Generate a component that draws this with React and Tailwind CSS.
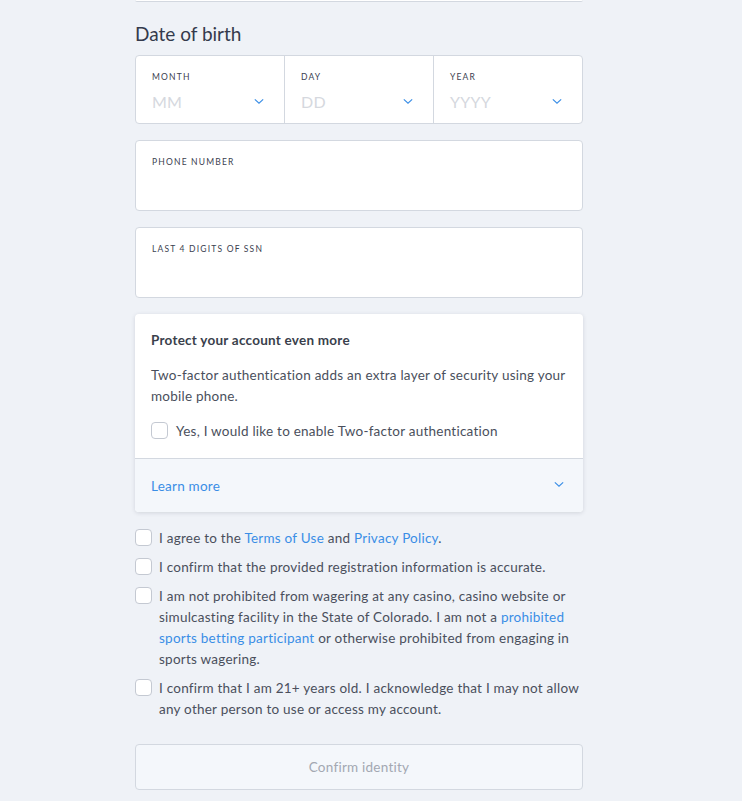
import { useState } from 'react';

// DOB / phone / SSN form tail + consent checkboxes
function Chevron({ className = '' }) {
  return (
    <svg viewBox="0 0 12 8" className={`w-[10px] h-[7px] ${className}`} fill="none" stroke="#3a8ee6" strokeWidth="1.4">
      <path d="M1 1.5l5 4.5 5-4.5" />
    </svg>
  );
}

function Box({ checked, onChange }) {
  return (
    <button
      type="button"
      onClick={() => onChange(!checked)}
      className={`w-[17px] h-[17px] shrink-0 rounded-[4px] border bg-white mt-[1px] ${checked ? 'border-[#3a8ee6] bg-[#3a8ee6]' : 'border-[#c4c9d2]'}`}
    />
  );
}

function Field({ label }) {
  return (
    <div className="h-[71px] bg-white border border-[#d3d8e0] rounded-[4px] px-4 pt-[15px]">
      <div className="text-[8.5px] tracking-[0.14em] text-[#3b4150] uppercase">{label}</div>
    </div>
  );
}

function DobCell({ label, placeholder, last }) {
  return (
    <div className={`flex-1 px-4 pt-[15px] ${last ? '' : 'border-r border-[#d3d8e0]'}`}>
      <div className="text-[8.5px] tracking-[0.14em] text-[#3b4150] uppercase">{label}</div>
      <div className="flex items-center justify-between mt-[6px] pr-1">
        <span className="text-[16px] text-[#d5d8de]">{placeholder}</span>
        <Chevron />
      </div>
    </div>
  );
}

export default function App() {
  const [checks, setChecks] = useState({});
  const toggle = (k) => (v) => setChecks((c) => ({ ...c, [k]: v }));

  return (
    <div className="min-h-screen bg-[#eff2f7] text-[#3c4150] font-['Lato','Open_Sans',sans-serif] tracking-[0.015em]">
      <div className="w-[448px] ml-[135px] pb-3">
        <div className="h-[2px] bg-white border-b border-[#d3d8e0] rounded-b-[4px]" />

        <h2 className="text-[19px] text-[#343a4c] mt-[19px] leading-[26px] tracking-normal">Date of birth</h2>

        <div className="mt-[8px] h-[69px] bg-white border border-[#d3d8e0] rounded-[4px] flex">
          <DobCell label="Month" placeholder="MM" />
          <DobCell label="Day" placeholder="DD" />
          <DobCell label="Year" placeholder="YYYY" last />
        </div>

        <div className="mt-[16px] flex flex-col gap-[16px]">
          <Field label="Phone number" />
          <Field label="Last 4 digits of SSN" />
        </div>

        <div className="mt-[16px] bg-white rounded-[4px] shadow-[0_1px_4px_rgba(40,50,70,0.15)] overflow-hidden">
          <div className="px-4 pt-[16px] pb-[16px]">
            <div className="text-[13.5px] font-bold text-[#3a3f4c]">Protect your account even more</div>
            <p className="mt-[15px] text-[13.5px] leading-[21px] text-[#4a4f5c]">
              Two-factor authentication adds an extra layer of security using your mobile phone.
            </p>
            <label className="mt-[14px] flex items-start gap-[8px] text-[13.5px] leading-[21px] text-[#4a4f5c]">
              <Box checked={!!checks.tfa} onChange={toggle('tfa')} />
              <span>Yes, I would like to enable Two-factor authentication</span>
            </label>
          </div>
          <div className="h-[54px] border-t border-[#d3d8e0] bg-[#f4f7fb] px-4 flex items-center justify-between">
            <span className="text-[13.5px] text-[#3a8ee6]">Learn more</span>
            <Chevron className="mr-[3px] -mt-[2px]" />
          </div>
        </div>

        <div className="mt-[16px] flex flex-col gap-[8px] text-[13.5px] leading-[21px] text-[#4a4f5c]">
          <label className="flex items-start gap-[7px]">
            <Box checked={!!checks.a} onChange={toggle('a')} />
            <span>
              I agree to the <a className="text-[#3a8ee6]">Terms of Use</a> and{' '}
              <a className="text-[#3a8ee6]">Privacy Policy</a>.
            </span>
          </label>
          <label className="flex items-start gap-[7px]">
            <Box checked={!!checks.b} onChange={toggle('b')} />
            <span>I confirm that the provided registration information is accurate.</span>
          </label>
          <label className="flex items-start gap-[7px]">
            <Box checked={!!checks.c} onChange={toggle('c')} />
            <span>
              I am not prohibited from wagering at any casino, casino website or simulcasting facility in the
              State of Colorado. I am not a{' '}
              <a className="text-[#3a8ee6]">prohibited sports betting participant</a> or otherwise prohibited
              from engaging in sports wagering.
            </span>
          </label>
          <label className="flex items-start gap-[7px]">
            <Box checked={!!checks.d} onChange={toggle('d')} />
            <span>
              I confirm that I am 21+ years old. I acknowledge that I may not allow any other person to use or
              access my account.
            </span>
          </label>
        </div>

        <button
          type="button"
          className="mt-[24px] w-full h-[46px] border border-[#d3d8e0] rounded-[4px] bg-[#f4f7fb] text-[13.5px] text-[#a3a8b2]"
        >
          Confirm identity
        </button>
      </div>
    </div>
  );
}
